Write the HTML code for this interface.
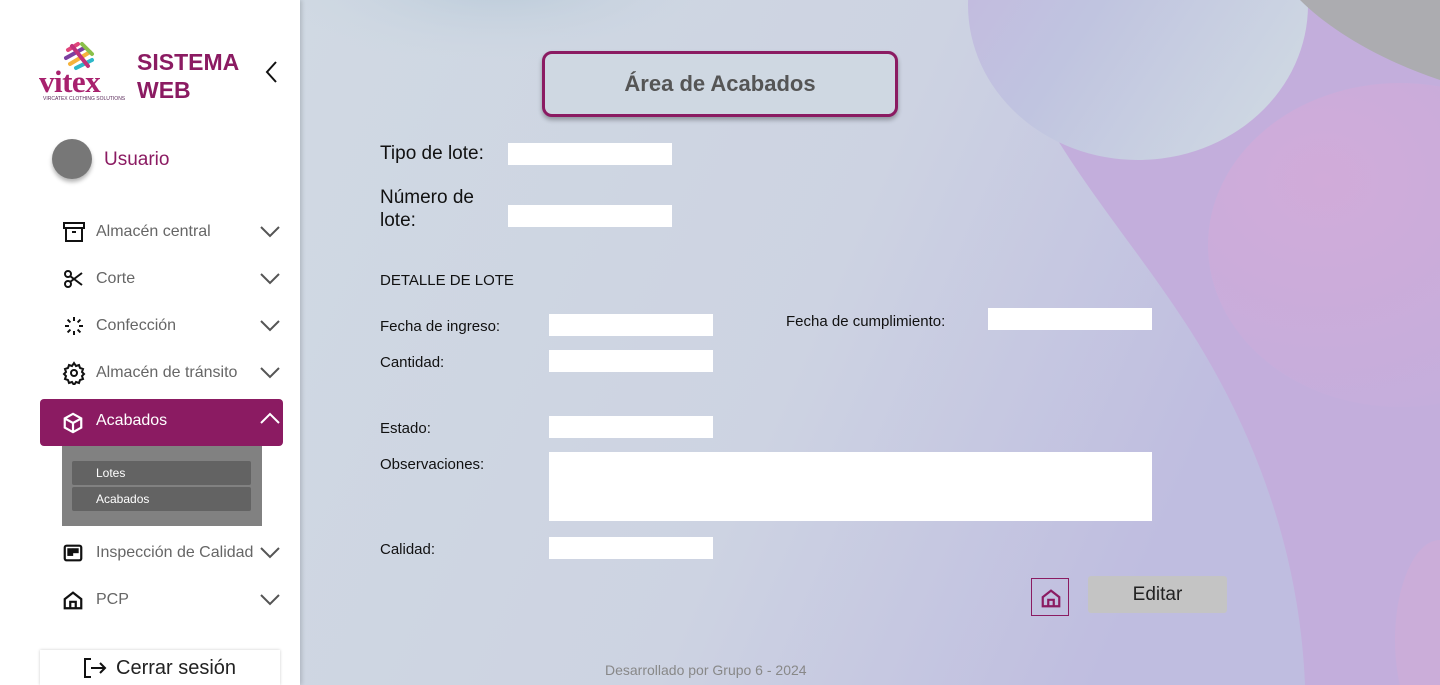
<!DOCTYPE html>
<html><head><meta charset="utf-8"><style>
*{box-sizing:border-box;margin:0;padding:0}
html,body{width:1440px;height:685px;overflow:hidden}
body{font-family:"Liberation Sans",sans-serif;position:relative;background:#cfd8e2}
.side{position:absolute;left:0;top:0;width:300px;height:685px;background:#fff;box-shadow:2px 0 4px rgba(0,0,0,.15);overflow:hidden}
.item{position:absolute;left:40px;width:243px;height:46px;display:flex;align-items:center;color:#666;font-size:16px}
.item svg.ic{position:absolute;left:22px}
.item span{position:absolute;left:56px}
.item .chev{position:absolute;left:220px}
.lbl{position:absolute;color:#111;font-size:15px}
.box{position:absolute;background:#fff}
</style></head><body>
<svg style="position:absolute;left:0;top:0" width="1440" height="685">
 <defs>
  <linearGradient id="lg" x1="0" y1="0" x2="1" y2="0.3"><stop offset="0" stop-color="#d0d9e3"/><stop offset="0.6" stop-color="#cdd3e2"/><stop offset="1" stop-color="#bfbde0"/></linearGradient>
  <linearGradient id="b1" x1="0" y1="0" x2="1" y2="0.6"><stop offset="0" stop-color="#c4b6de"/><stop offset="0.5" stop-color="#c0c4e0"/><stop offset="1" stop-color="#cdd6e2"/></linearGradient>
  <radialGradient id="b2" cx="0.3" cy="0.3" r="0.8"><stop offset="0" stop-color="#d1abd9"/><stop offset="1" stop-color="#c4aedc"/></radialGradient>
  <radialGradient id="tl" cx="0.5" cy="0.5" r="0.5"><stop offset="0" stop-color="#b8c9d8"/><stop offset="1" stop-color="#d0d9e3" stop-opacity="0"/></radialGradient>
 </defs>
 <rect x="300" y="0" width="1140" height="685" fill="#c3aedc"/>
 <path d="M300 0 H1000 C1020 120 1120 220 1190 330 C1260 440 1300 560 1305 685 H300 Z" fill="url(#lg)"/>
 <ellipse cx="1138" cy="5" rx="170" ry="155" fill="url(#b1)"/>
 <path d="M1300 0 H1440 V80 C1380 60 1330 30 1300 0Z" fill="#acacb0"/>
 <ellipse cx="1400" cy="245" rx="192" ry="162" fill="url(#b2)"/>
 <ellipse cx="1440" cy="640" rx="45" ry="100" fill="#cbadd9"/>
 <ellipse cx="500" cy="-20" rx="250" ry="90" fill="url(#tl)"/>
</svg>
<div class="side">
 <svg style="position:absolute;left:62px;top:40px" width="34" height="32" viewBox="0 0 34 32">
  <g stroke-width="4" stroke-linecap="round">
  <line x1="6" y1="10" x2="16" y2="4" stroke="#e0457b"/><line x1="4" y1="18" x2="22" y2="8" stroke="#7c3fa0"/>
  <line x1="8" y1="24" x2="28" y2="12" stroke="#f5b33c"/><line x1="14" y1="28" x2="30" y2="20" stroke="#2eb8c9"/>
  <line x1="10" y1="6" x2="26" y2="26" stroke="#c0307a"/><line x1="20" y1="4" x2="30" y2="14" stroke="#8ac04a"/></g></svg>
 <div style="position:absolute;left:39px;top:64px;font-family:'Liberation Serif',serif;font-weight:bold;font-size:31px;color:#a8216e;letter-spacing:-.5px">vitex</div>
 <div style="position:absolute;left:43px;top:96px;font-size:5px;color:#5a2a5a">VIRCATEX CLOTHING SOLUTIONS</div>
 <div style="position:absolute;left:137px;top:48px;font-weight:bold;font-size:23px;line-height:28px;color:#8b1b62">SISTEMA<br>WEB</div>
 <svg style="position:absolute;left:264px;top:60px" width="14" height="24"><path d="M12 2L3 12l9 10" fill="none" stroke="#111" stroke-width="2"/></svg>
 <div style="position:absolute;left:52px;top:139px;width:40px;height:40px;border-radius:50%;background:#777;box-shadow:0 3px 4px rgba(0,0,0,.3)"></div>
 <div style="position:absolute;left:104px;top:149px;font-size:19px;color:#8b1b62">Usuario</div>

 <div class="item" style="top:209px"><svg class="ic" width="24" height="24" viewBox="0 0 24 24" fill="none" stroke="#111" stroke-width="2"><rect x="2" y="3" width="20" height="5"/><path d="M4 8v13h16V8M10 12h4"/></svg><span>Almacén central</span><svg class="chev" width="20" height="12"><path d="M1 1l9 9 9-9" fill="none" stroke="#555" stroke-width="2"/></svg></div>
 <div class="item" style="top:256px"><svg class="ic" width="24" height="24" viewBox="0 0 24 24" fill="none" stroke="#111" stroke-width="2"><circle cx="6" cy="7" r="3"/><circle cx="6" cy="17" r="3"/><path d="M8 9l12 9M8 15l12-9"/></svg><span>Corte</span><svg class="chev" width="20" height="12"><path d="M1 1l9 9 9-9" fill="none" stroke="#555" stroke-width="2"/></svg></div>
 <div class="item" style="top:303px"><svg class="ic" width="24" height="24" viewBox="0 0 24 24" fill="none" stroke="#111" stroke-width="2"><path d="M12 3v4M12 17v4M3 12h4M17 12h4M5.6 5.6l2.8 2.8M15.6 15.6l2.8 2.8M5.6 18.4l2.8-2.8M15.6 8.4l2.8-2.8"/></svg><span>Confección</span><svg class="chev" width="20" height="12"><path d="M1 1l9 9 9-9" fill="none" stroke="#555" stroke-width="2"/></svg></div>
 <div class="item" style="top:350px"><svg class="ic" width="24" height="24" viewBox="0 0 24 24" fill="none" stroke="#111" stroke-width="2"><circle cx="12" cy="12" r="3"/><path d="M12 2l2 3 3-1 1 3 3 1-1 3 2 2-2 2 1 3-3 1-1 3-3-1-2 3-2-3-3 1-1-3-3-1 1-3-2-2 2-2-1-3 3-1 1-3 3 1z"/></svg><span>Almacén de tránsito</span><svg class="chev" width="20" height="12"><path d="M1 1l9 9 9-9" fill="none" stroke="#555" stroke-width="2"/></svg></div>
 <div class="item" style="top:399px;height:47px;background:#8b1b62;border-radius:4px;color:#fff"><svg class="ic" width="22" height="22" viewBox="0 0 24 24" fill="none" stroke="#fff" stroke-width="2.4"><path d="M12 2l9 5v10l-9 5-9-5V7z M3 7l9 5 9-5M12 12v10"/></svg><span style="top:13px">Acabados</span><svg class="chev" width="20" height="12" style="top:13px"><path d="M1 11l9-9 9 9" fill="none" stroke="#fff" stroke-width="2"/></svg></div>
 <div style="position:absolute;left:62px;top:446px;width:200px;height:80px;background:#818181"></div>
 <div style="position:absolute;left:72px;top:461px;width:179px;height:24px;background:#636363;border-radius:2px;color:#fff;font-size:12px;padding:5px 0 0 24px">Lotes</div>
 <div style="position:absolute;left:72px;top:487px;width:179px;height:24px;background:#636363;border-radius:2px;color:#fff;font-size:12px;padding:5px 0 0 24px">Acabados</div>
 <div class="item" style="top:530px"><svg class="ic" width="22" height="22" viewBox="0 0 24 24" fill="none" stroke="#111" stroke-width="2.4"><rect x="3" y="4" width="18" height="16" rx="2"/><rect x="7" y="8" width="4" height="6" fill="#111"/><rect x="13" y="8" width="4" height="3" fill="#111"/></svg><span>Inspección de Calidad</span><svg class="chev" width="20" height="12"><path d="M1 1l9 9 9-9" fill="none" stroke="#555" stroke-width="2"/></svg></div>
 <div class="item" style="top:577px"><svg class="ic" width="22" height="22" viewBox="0 0 24 24" fill="none" stroke="#111" stroke-width="2.4"><path d="M3 11l9-7 9 7v10H3z M9 21v-7h6v7"/></svg><span>PCP</span><svg class="chev" width="20" height="12"><path d="M1 1l9 9 9-9" fill="none" stroke="#555" stroke-width="2"/></svg></div>
 <div style="position:absolute;left:40px;top:650px;width:240px;height:35px;background:#fff;box-shadow:0 0 3px rgba(0,0,0,.2)"></div>
 <svg style="position:absolute;left:83px;top:657px" width="24" height="22" viewBox="0 0 24 22" fill="none" stroke="#111" stroke-width="2"><path d="M8 2H2v18h6M8 11h14M17 6l5 5-5 5"/></svg>
 <div style="position:absolute;left:116px;top:657px;font-size:20px;color:#222">Cerrar sesión</div>
</div>

<div style="position:absolute;left:542px;top:51px;width:356px;height:66px;border:3px solid #8b1b62;border-radius:10px;background:#cfd8e2;box-shadow:0 3px 5px rgba(0,0,0,.3);text-align:center;line-height:60px;font-weight:bold;font-size:22px;color:#555">Área de Acabados</div>
<div class="lbl" style="left:380px;top:143px;font-size:19px">Tipo de lote:</div>
<div class="box" style="left:508px;top:143px;width:164px;height:22px"></div>
<div class="lbl" style="left:380px;top:186px;font-size:19px;line-height:23px">Número de<br>lote:</div>
<div class="box" style="left:508px;top:205px;width:164px;height:22px"></div>
<div class="lbl" style="left:380px;top:272px">DETALLE DE LOTE</div>
<div class="lbl" style="left:380px;top:318px">Fecha de ingreso:</div>
<div class="box" style="left:549px;top:314px;width:164px;height:22px"></div>
<div class="lbl" style="left:786px;top:313px">Fecha de cumplimiento:</div>
<div class="box" style="left:988px;top:308px;width:164px;height:22px"></div>
<div class="lbl" style="left:380px;top:354px">Cantidad:</div>
<div class="box" style="left:549px;top:350px;width:164px;height:22px"></div>
<div class="lbl" style="left:380px;top:420px">Estado:</div>
<div class="box" style="left:549px;top:416px;width:164px;height:22px"></div>
<div class="lbl" style="left:380px;top:456px">Observaciones:</div>
<div class="box" style="left:549px;top:452px;width:603px;height:69px"></div>
<div class="lbl" style="left:380px;top:541px">Calidad:</div>
<div class="box" style="left:549px;top:537px;width:164px;height:22px"></div>
<div style="position:absolute;left:1031px;top:578px;width:38px;height:38px;border:1px solid #8b1b62"><svg style="position:absolute;left:8px;top:8px" width="22" height="22" viewBox="0 0 24 24" fill="none" stroke="#8b1b62" stroke-width="2.4"><path d="M3 11l9-7 9 7v10H3z M9 21v-7h6v7"/></svg></div>
<div style="position:absolute;left:1088px;top:576px;width:139px;height:37px;background:#c4c4c4;border-radius:3px;text-align:center;line-height:37px;font-size:19px;color:#222">Editar</div>
<div style="position:absolute;left:605px;top:662px;font-size:14px;color:#888">Desarrollado por Grupo 6 - 2024</div>
</body></html>
